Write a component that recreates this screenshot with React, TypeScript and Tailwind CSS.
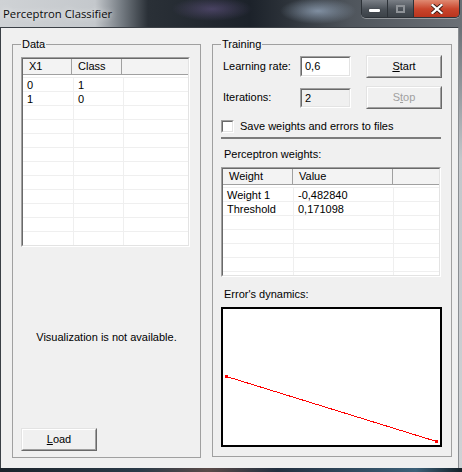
import React from "react";

type Col = { title: string; head: number; body: number };

function Sunken({ className, children }: { className: string; children?: React.ReactNode }) {
  return (
    <div className={`border border-t-[#a0a0a0] border-l-[#a0a0a0] border-b-white border-r-white ${className}`}>
      <div className="w-full h-full border border-t-[#696969] border-l-[#696969] border-b-[#e3e3e3] border-r-[#e3e3e3] overflow-hidden">
        {children}
      </div>
    </div>
  );
}

function Button({ className, disabled, children }: { className: string; disabled?: boolean; children: React.ReactNode }) {
  return (
    <div className={`border border-t-[#e3e3e3] border-l-[#e3e3e3] border-b-[#696969] border-r-[#696969] bg-[#f0f0f0] ${className}`}>
      <div
        className={`w-full h-full flex items-center justify-center border border-t-white border-l-white border-b-[#a0a0a0] border-r-[#a0a0a0] ${
          disabled ? "text-[#a0a0a0]" : "text-black"
        }`}
      >
        {children}
      </div>
    </div>
  );
}

function ListView({ cols, rows, className, lines }: { cols: Col[]; rows: string[][]; className: string; lines: number }) {
  const empty = Array.from({ length: lines - rows.length }, () => cols.map(() => ""));
  return (
    <Sunken className={`bg-white ${className}`}>
      <div className="flex h-[16px] bg-[#f3f3f3] border-b border-[#a0a0a0]">
        {cols.map((c, i) => (
          <div key={i} style={{ width: c.head }} className="shrink-0 h-full pl-[6px] leading-[15px] border-r border-[#a0a0a0]">
            {c.title}
          </div>
        ))}
        <div className="flex-1" />
      </div>
      <div className="mt-[2px] border-t border-[#efefef]">
        {[...rows, ...empty].map((r, ri) => (
          <div key={ri} className="flex h-[14px] border-b border-[#efefef]">
            {r.map((cell, ci) => (
              <div key={ci} style={{ width: cols[ci].body }} className="shrink-0 h-full pl-[4px] leading-[14px] border-r border-[#efefef]">
                {cell}
              </div>
            ))}
            <div className="flex-1" />
          </div>
        ))}
      </div>
    </Sunken>
  );
}

function Group({ title, className, children }: { title: string; className: string; children: React.ReactNode }) {
  return (
    <div className={`relative border border-[#a0a0a0] flex flex-col ${className}`}>
      <span className="absolute -top-[7px] left-[8px] px-[1px] bg-[#f0f0f0] leading-[13px]">{title}</span>
      {children}
    </div>
  );
}

export default function App() {
  return (
    <div className="w-[462px] h-[472px] overflow-hidden flex flex-col font-['Liberation_Sans',Arial,sans-serif] text-[11px] leading-[13px] text-black bg-[#c8cbce]">
      {/* glass title bar */}
      <div className="h-[27px] shrink-0 flex items-start bg-[radial-gradient(ellipse_38px_13px_at_318px_11px,rgba(150,168,190,0.75),transparent),radial-gradient(ellipse_40px_12px_at_212px_9px,rgba(105,88,140,0.55),transparent),linear-gradient(to_right,#cfd2d5_0px,#c4c8cc_95px,#737a81_122px,#2a3037_148px,#1c222a_250px,#2e343b_290px,#4f555c_350px,#6b7076_462px)]">
        <div className="ml-[3px] mt-[6px] font-['Open_Sans',sans-serif] text-[11.3px] leading-[15px] text-[#0b0b0b] [text-shadow:0_0_6px_rgba(255,255,255,0.9)]">
          Perceptron Classifier
        </div>
        <div className="flex-1" />
        <div className="mr-[2px] flex h-[18px] border border-t-0 border-[#2d3238] rounded-b-[5px] overflow-hidden shadow-[0_1px_0_rgba(255,255,255,0.35)]">
          <div className="w-[26px] h-[17px] flex items-center justify-center border-r border-[#2d3238] bg-[linear-gradient(#7a7f86,#4a5057_55%,#3c4248)]">
            <div className="w-[11px] h-[3px] mt-[4px] bg-white rounded-[1px] shadow-[0_0_1px_#222]" />
          </div>
          <div className="w-[26px] h-[17px] flex items-center justify-center border-r border-[#2d3238] bg-[linear-gradient(#7a7f86,#4a5057_55%,#3c4248)]">
            <div className="w-[9px] h-[8px] border-2 border-[#8e9297]" />
          </div>
          <div className="w-[45px] h-[18px] flex items-center justify-center bg-[linear-gradient(#e08a72,#c9452c_50%,#b8321c)]">
            <svg width="12" height="10" viewBox="0 0 12 10">
              <path d="M1.5 1 L10.5 9 M10.5 1 L1.5 9" stroke="#3a1a14" strokeWidth="4" strokeLinecap="square" />
              <path d="M1.5 1 L10.5 9 M10.5 1 L1.5 9" stroke="#ffffff" strokeWidth="2.2" strokeLinecap="square" />
            </svg>
          </div>
        </div>
      </div>

      <div className="flex h-[441px] shrink-0">
        {/* client area */}
        <div className="w-[459px] h-full flex bg-[#f0f0f0] border-l border-t border-r border-l-[#3b4046] border-t-[#3b4046] border-r-[#8a8e92]">
          <Group title="Data" className="ml-[11px] mt-[16px] w-[189px] h-[414px]">
            <ListView
              className="ml-[8px] mt-[12px] w-[169px] h-[190px]"
              lines={12}
              cols={[
                { title: "X1", head: 49, body: 51 },
                { title: "Class", head: 50, body: 50 },
              ]}
              rows={[
                ["0", "1"],
                ["1", "0"],
              ]}
            />
            <div className="flex-1 flex items-center justify-center">Visualization is not available.</div>
            <Button className="ml-[8px] mb-[6px] w-[76px] h-[23px]">
              <span>
                <span className="underline">L</span>oad
              </span>
            </Button>
          </Group>

          <Group title="Training" className="ml-[11px] mt-[16px] w-[240px] h-[413px] pl-[8px]">
            <div className="mt-[10px] h-[23px] flex items-center">
              <div className="ml-[2px] w-[77px]">Learning rate:</div>
              <Sunken className="w-[51px] h-[21px] bg-white">
                <div className="pl-[3px] leading-[17px]">0,6</div>
              </Sunken>
              <Button className="ml-[15px] w-[76px] h-[23px]">
                <span>
                  <span className="underline">S</span>tart
                </span>
              </Button>
            </div>
            <div className="mt-[8px] h-[23px] flex items-center">
              <div className="ml-[2px] w-[77px]">Iterations:</div>
              <Sunken className="w-[51px] h-[20px] bg-[#f0f0f0]">
                <div className="pl-[3px] leading-[16px]">2</div>
              </Sunken>
              <Button disabled className="ml-[15px] w-[76px] h-[23px]">
                <span>
                  S<span className="underline">t</span>op
                </span>
              </Button>
            </div>
            <div className="mt-[11px] h-[13px] flex items-center">
              <Sunken className="w-[13px] h-[13px] bg-white" />
              <div className="ml-[6px]">Save weights and errors to files</div>
            </div>
            <div className="mt-[4px] w-[220px] h-[2px] bg-[#7c7c7c]" />
            <div className="mt-[9px] ml-[3px]">Perceptron weights:</div>
            <ListView
              className="mt-[6px] w-[220px] h-[110px]"
              lines={7}
              cols={[
                { title: "Weight", head: 70, body: 71 },
                { title: "Value", head: 100, body: 100 },
              ]}
              rows={[
                ["Weight 1", "-0,482840"],
                ["Threshold", "0,171098"],
              ]}
            />
            <div className="mt-[11px] ml-[3px]">Error's dynamics:</div>
            <div className="mt-[6px] w-[221px] h-[140px] border-2 border-black bg-white">
              <svg width="217" height="136" viewBox="0 0 217 136" shapeRendering="crispEdges">
                <line x1="3.5" y1="67.5" x2="213.5" y2="132.5" stroke="#ff0000" strokeWidth="1" />
                <rect x="2" y="66" width="3" height="3" fill="#ff0000" />
                <rect x="212" y="131" width="3" height="3" fill="#ff0000" />
              </svg>
            </div>
          </Group>
        </div>
        <div className="flex-1 bg-[linear-gradient(#6b7076,#c3c7cb_30%,#cfd2d5)]" />
      </div>

      <div className="flex-1 bg-[linear-gradient(to_right,#1b232b,#2a3a48_30%,#5a4a48_45%,#233040_60%,#3c6078_90%,#152028)]" />
    </div>
  );
}
